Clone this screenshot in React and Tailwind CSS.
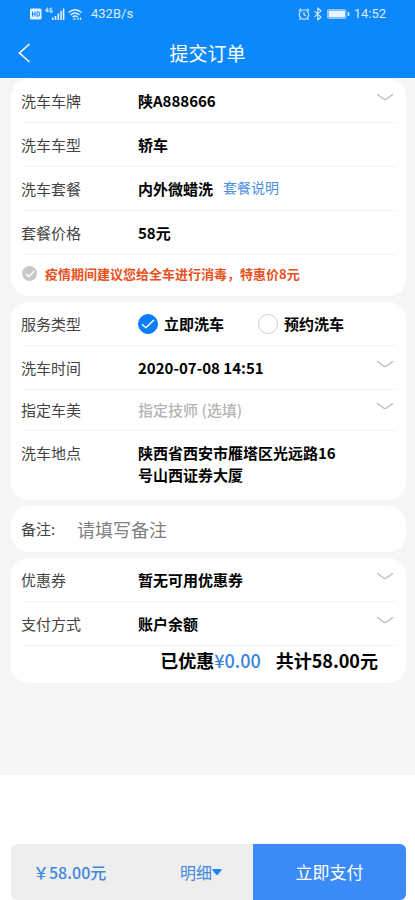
import React, { useState } from 'react';

const Chevron = () => (
    <svg width="18" height="8" viewBox="0 0 18 8" fill="none" stroke="#b9b9b9" strokeWidth="1.3" className="pointer-events-none col-start-1 row-start-1 mr-[2px] mb-2 justify-self-end">
        <path d="M1 1.2 L8 6.2 Q9 6.9 10 6.2 L17 1.2" />
    </svg>
);

const Card = ({ children, className = '' }) => (
    <section className={`rounded-[18px] bg-white px-[10px] ${className}`}>{children}</section>
);

const Row = ({ label, id, height = 'h-11', children }) => (
    <div className={`flex items-center border-b border-[#f3f3f3] ${height}`}>
        <label htmlFor={id} className="w-[117px] shrink-0 text-[15px] leading-[22px] text-[#444]">{label}</label>
        {children}
    </div>
);

const Value = ({ id, children }) => (
    <output id={id} className="text-[15px] leading-[22px] font-bold text-black">{children}</output>
);

const Picker = ({ id, options, muted }) => (
    <div className="grid flex-1 items-center">
        <select
            id={id}
            className={`col-start-1 row-start-1 w-full appearance-none bg-transparent text-[15px] leading-[22px] outline-none ${muted ? 'font-medium text-[#b4b4b4]' : 'font-bold text-black'}`}
        >
            {options.map((option) => (
                <option key={option}>{option}</option>
            ))}
        </select>
        <Chevron />
    </div>
);

const Radio = ({ label, value, selected, onChange }) => (
    <label className="flex items-center gap-[6px] text-[15px] leading-[22px] font-bold text-black">
        <span className="grid size-5 place-items-center">
            <input
                type="radio"
                name="service"
                value={value}
                checked={selected === value}
                onChange={() => onChange(value)}
                className="col-start-1 row-start-1 size-5 appearance-none rounded-full border border-[#cfcfcf] bg-white checked:border-[#0a7dfa] checked:bg-[#0a7dfa]"
            />
            {selected === value && (
                <svg width="14" height="12" viewBox="0 0 14 12" fill="none" stroke="#fff" strokeWidth="1.5" className="pointer-events-none col-start-1 row-start-1">
                    <path d="M1 6.2 L4.8 9.8 L13 2" />
                </svg>
            )}
        </span>
        {label}
    </label>
);

const StatusBar = () => (
    <div className="flex h-7 items-center justify-between pr-[29px] pl-[30px] font-[Roboto,sans-serif] text-[13px] leading-4 text-[#d9edff]">
        <div className="flex items-center">
            <svg width="53" height="14" viewBox="0 0 53 14" fill="none" stroke="#e2f1ff">
                <rect x="0" y="1.5" width="11.5" height="11" rx="1.5" fill="#e2f1ff" stroke="none" />
                <path d="M2.5 4.5v5M5 4.5v5M2.5 7H5M7 4.8v4.4h1q1.6 0 1.6-2.2T8 4.8z" stroke="#0d88fb" strokeWidth="1" />
                <path d="M17.5 .5L15.500 4h3M17.800 1.500v4M22.200 1.200h-2v4h2V3.300h-1" strokeWidth="1" />
                <path d="M22.700 13v-2.500M25.500 13V9M28.300 13V6.500M31.100 13V4M33.600 13V1.500" strokeWidth="1.600" />
                <path d="M38.500 5.500q6.500-5.500 13 0M40.500 8q4.500-3.800 9 0M42.500 10q2.500-2 5 0" strokeWidth="1.400" />
                <path d="M43.500 12h2M48 13v-2.500M50.500 10.500V13" strokeWidth="1.300" />
            </svg>
            <span className="ml-2">432B/s</span>
        </div>
        <div className="flex items-center">
            <svg width="52" height="14" viewBox="0 0 52 14" fill="none" stroke="#d9edff" strokeWidth="1.100">
                <circle cx="6" cy="7.500" r="4.700" />
                <path d="M6 4.800v3l2 1.200M.8 3.800l2.400-2.200M11.200 3.800L8.800 1.600M2.800 11.200l-1.400 1.600M9.200 11.200l1.400 1.600" />
                <path d="M16.500 4.200l6.500 6-3.200 2.600V1.200l3.200 2.600-6.500 6" />
                <rect x="29.500" y="2.500" width="18.500" height="9" rx="1.500" stroke="#8cc6ff" />
                <rect x="30.500" y="3.500" width="16.500" height="7" fill="#e8f4ff" stroke="none" />
                <path d="M50.500 5v4" strokeWidth="1.600" />
            </svg>
            <time className="ml-1">14:52</time>
        </div>
    </div>
);

const App = () => {
    const [service, setService] = useState('now');
    const [disinfect, setDisinfect] = useState(false);
    const [remark, setRemark] = useState('');

    return (
        <div className="flex min-h-screen flex-col bg-white font-['Noto_Sans_CJK_SC',sans-serif]">
            <header className="bg-[#0d88fb] text-white">
                <StatusBar />
                <div className="grid h-[50px] grid-cols-[1fr_auto_1fr] items-center px-[18px]">
                    <button type="button" aria-label="返回" className="justify-self-start">
                        <svg width="13" height="20" viewBox="0 0 13 20" fill="none" stroke="#fff" strokeWidth="1.500">
                            <path d="M11.500 1L1.500 10l10 9" />
                        </svg>
                    </button>
                    <h1 className="text-[19px] leading-7">提交订单</h1>
                </div>
            </header>

            <main className="flex flex-col gap-[6px] bg-[#f6f6f6] pt-px pr-[9px] pb-[92px] pl-[11px]">
                <Card>
                    <Row label="洗车车牌" id="plate">
                        <Picker id="plate" options={['陕A888666']} />
                    </Row>
                    <Row label="洗车车型" id="model">
                        <Value id="model">轿车</Value>
                    </Row>
                    <Row label="洗车套餐" id="plan">
                        <Value id="plan">内外微蜡洗</Value>
                        <a href="#plan" className="ml-[10px] pb-1 text-[14px] leading-5 text-[#4a90e2]">套餐说明</a>
                    </Row>
                    <Row label="套餐价格" id="price">
                        <Value id="price">58元</Value>
                    </Row>
                    <label className="flex h-[41px] items-center pb-1 text-[13px] leading-5 font-bold text-[#e8501c]">
                        <span className="mr-2 ml-px grid size-[15px] place-items-center">
                            <input
                                type="checkbox"
                                checked={disinfect}
                                onChange={(e) => setDisinfect(e.target.checked)}
                                className="col-start-1 row-start-1 size-[15px] appearance-none rounded-full bg-[#c8c8c8] checked:bg-[#0a7dfa]"
                            />
                            <svg width="10" height="8" viewBox="0 0 10 8" fill="none" stroke="#fff" strokeWidth="1.400" className="pointer-events-none col-start-1 row-start-1">
                                <path d="M1 4l2.800 2.800L9 1.200" />
                            </svg>
                        </span>
                        疫情期间建议您给全车进行消毒，特惠价8元
                    </label>
                </Card>

                <Card>
                    <div role="radiogroup" aria-label="服务类型" className="flex h-11 items-center border-b border-[#f3f3f3]">
                        <span className="w-[117px] shrink-0 text-[15px] leading-[22px] text-[#444]">服务类型</span>
                        <div className="flex gap-[34px]">
                            <Radio label="立即洗车" value="now" selected={service} onChange={setService} />
                            <Radio label="预约洗车" value="later" selected={service} onChange={setService} />
                        </div>
                    </div>
                    <Row label="洗车时间" id="time">
                        <Picker id="time" options={['2020-07-08 14:51']} />
                    </Row>
                    <Row label="指定车美" id="staff" height="h-[41px]">
                        <Picker id="staff" options={['指定技师 (选填)']} muted />
                    </Row>
                    <div className="flex pt-[11px] pb-[14px] text-[15px] leading-[22px]">
                        <span className="w-[117px] shrink-0 text-[#444]">洗车地点</span>
                        <address className="mr-[50px] font-bold text-black not-italic">陕西省西安市雁塔区光远路16号山西证券大厦</address>
                    </div>
                </Card>

                <Card className="flex h-[46px] items-center">
                    <label htmlFor="remark" className="w-14 shrink-0 text-[15px] leading-[22px] text-[#444]">备注:</label>
                    <input
                        id="remark"
                        type="text"
                        placeholder="请填写备注"
                        value={remark}
                        onChange={(e) => setRemark(e.target.value)}
                        className="min-w-0 flex-1 text-[18px] leading-7 text-black outline-none placeholder:text-[#808080]"
                    />
                </Card>

                <Card>
                    <Row label="优惠券" id="coupon">
                        <Picker id="coupon" options={['暂无可用优惠券']} />
                    </Row>
                    <Row label="支付方式" id="payment">
                        <Picker id="payment" options={['账户余额']} />
                    </Row>
                    <p className="flex justify-end gap-[15px] pt-[2px] pr-[18px] pb-[11px] text-[18px] leading-6 font-bold text-black">
                        <span>已优惠<span className="font-medium text-[#3a84d8]">¥0.00</span></span>
                        <span>共计58.00元</span>
                    </p>
                </Card>
            </main>

            <footer className="mt-auto pt-4 pr-[9px] pl-[11px]">
                <div className="flex h-14 overflow-hidden rounded-md bg-[#eee]">
                    <div className="flex flex-1 items-center justify-between pr-[31px] pl-[22px] text-[16px] leading-6 text-[#3f88e0]">
                        <strong className="font-medium">￥58.00元</strong>
                        <button type="button" className="flex items-center">
                            明细
                            <svg width="10" height="6" viewBox="0 0 10 6" fill="#1a86f2">
                                <path d="M1 0h8q1 0 .6.900L6 5.400q-1 1-2 0L.4.900Q0 0 1 0z" />
                            </svg>
                        </button>
                    </div>
                    <button type="button" className="w-[153px] bg-[#3a8af7] text-[17px] leading-6 text-white">立即支付</button>
                </div>
            </footer>
        </div>
    );
};

export default App;
